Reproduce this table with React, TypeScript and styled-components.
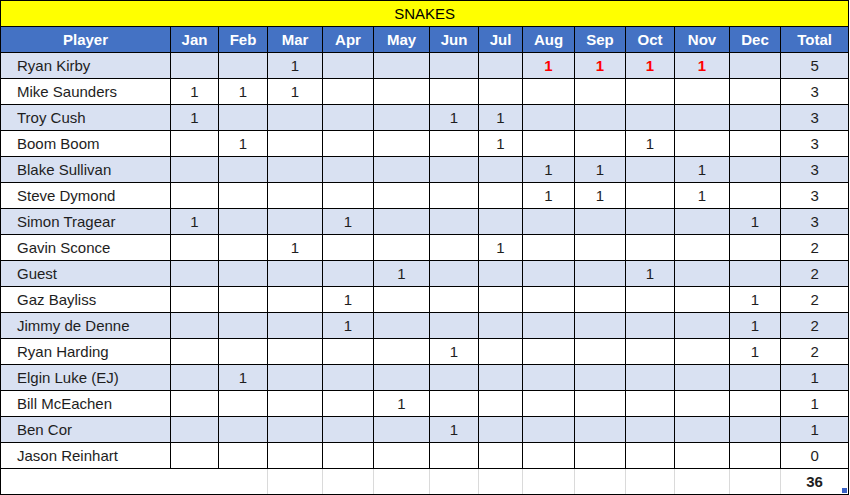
import styled, { createGlobalStyle } from 'styled-components';

const GlobalStyle = createGlobalStyle`
    body {
        margin: 0;
        background: #fff;
        font-family: "Liberation Sans", Arial, sans-serif;
    }
`;

const Sheet = styled.table`
    border-collapse: collapse;
    table-layout: fixed;
    width: 849px;
    font-size: 15px;
    color: #1e1e1e;
`;

const TitleCell = styled.td`
    background: #ffff00;
    border: 1px solid #000;
    height: 25px;
    padding: 0;
    text-align: center;
    color: #000;
`;

const HeadCell = styled.th`
    background: #4472c4;
    color: #fff;
    font-weight: bold;
    border: 1px solid #000;
    height: 25px;
    padding: 0;
    text-align: center;
`;

const Row = styled.tr<{ $band: boolean }>`
    background: ${(p) => (p.$band ? '#d9e1f2' : '#fff')};
`;

const NameCell = styled.td`
    border: 1px solid #000;
    height: 25px;
    padding: 0 0 0 16px;
    text-align: left;
    white-space: nowrap;
`;

const NumCell = styled.td<{ $hot?: boolean }>`
    border: 1px solid #000;
    height: 25px;
    padding: 0;
    text-align: center;
    color: ${(p) => (p.$hot ? '#ff0000' : 'inherit')};
    font-weight: ${(p) => (p.$hot ? 'bold' : 'normal')};
`;

const FootCell = styled.td<{ $grid?: boolean }>`
    height: 25px;
    padding: 0;
    text-align: center;
    border-bottom: 1px solid #000;
    border-left: 1px solid ${(p) => (p.$grid ? '#dadada' : 'transparent')};
`;

const FootFirst = styled.td`
    border-left: 1px solid #000;
    border-bottom: 1px solid #000;
    height: 25px;
    padding: 0;
`;

const GrandTotal = styled.td`
    position: relative;
    border-left: 1px solid #dadada;
    border-right: 1px solid #000;
    border-bottom: 1px solid #000;
    height: 25px;
    padding: 0;
    text-align: center;
    font-weight: bold;
`;

const Handle = styled.span`
    position: absolute;
    right: 1px;
    bottom: 1px;
    width: 5px;
    height: 5px;
    background: #3a62c6;
`;

const widths = [170, 48, 49, 55, 51, 56, 49, 44, 52, 51, 49, 55, 51, 68];
const months = ['Jan', 'Feb', 'Mar', 'Apr', 'May', 'Jun', 'Jul', 'Aug', 'Sep', 'Oct', 'Nov', 'Dec'];

// month indexes where the player scored, months flagged red for Ryan
const players: { name: string; hits: number[]; hot?: number[] }[] = [
    { name: 'Ryan Kirby', hits: [2, 7, 8, 9, 10], hot: [7, 8, 9, 10] },
    { name: 'Mike Saunders', hits: [0, 1, 2] },
    { name: 'Troy Cush', hits: [0, 5, 6] },
    { name: 'Boom Boom', hits: [1, 6, 9] },
    { name: 'Blake Sullivan', hits: [7, 8, 10] },
    { name: 'Steve Dymond', hits: [7, 8, 10] },
    { name: 'Simon Tragear', hits: [0, 3, 11] },
    { name: 'Gavin Sconce', hits: [2, 6] },
    { name: 'Guest', hits: [4, 9] },
    { name: 'Gaz Bayliss', hits: [3, 11] },
    { name: 'Jimmy de Denne', hits: [3, 11] },
    { name: 'Ryan Harding', hits: [5, 11] },
    { name: 'Elgin Luke (EJ)', hits: [1] },
    { name: 'Bill McEachen', hits: [4] },
    { name: 'Ben Cor', hits: [5] },
    { name: 'Jason Reinhart', hits: [] },
];

export default function App() {
    const grand = players.reduce((sum, p) => sum + p.hits.length, 0);

    return (
        <>
            <GlobalStyle />
            <Sheet>
                <colgroup>
                    {widths.map((w, i) => (
                        <col key={i} style={{ width: w }} />
                    ))}
                </colgroup>
                <tbody>
                    <tr>
                        <TitleCell colSpan={14}>SNAKES</TitleCell>
                    </tr>
                    <tr>
                        <HeadCell>Player</HeadCell>
                        {months.map((m) => (
                            <HeadCell key={m}>{m}</HeadCell>
                        ))}
                        <HeadCell>Total</HeadCell>
                    </tr>
                    {players.map((p, r) => (
                        <Row key={p.name} $band={r % 2 === 0}>
                            <NameCell>{p.name}</NameCell>
                            {months.map((m, i) => (
                                <NumCell key={m} $hot={p.hot?.includes(i)}>
                                    {p.hits.includes(i) ? 1 : ''}
                                </NumCell>
                            ))}
                            <NumCell>{p.hits.length}</NumCell>
                        </Row>
                    ))}
                    <tr>
                        <FootFirst colSpan={3} />
                        {months.slice(2).map((m) => (
                            <FootCell key={m} $grid />
                        ))}
                        <GrandTotal>
                            {grand}
                            <Handle />
                        </GrandTotal>
                    </tr>
                </tbody>
            </Sheet>
        </>
    );
}
